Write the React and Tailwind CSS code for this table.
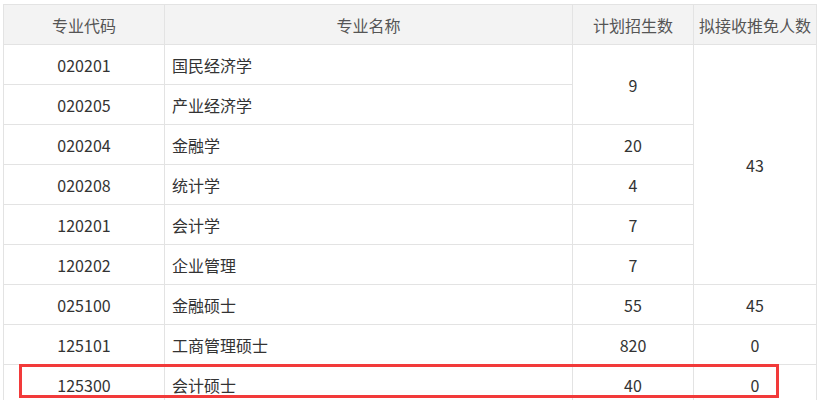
const rows = [
  { code: "020201", name: "国民经济学", plan: { v: "9", span: 2 }, tm: { v: "43", span: 6 } },
  { code: "020205", name: "产业经济学" },
  { code: "020204", name: "金融学", plan: { v: "20", span: 1 } },
  { code: "020208", name: "统计学", plan: { v: "4", span: 1 } },
  { code: "120201", name: "会计学", plan: { v: "7", span: 1 } },
  { code: "120202", name: "企业管理", plan: { v: "7", span: 1 } },
  { code: "025100", name: "金融硕士", plan: { v: "55", span: 1 }, tm: { v: "45", span: 1 } },
  { code: "125101", name: "工商管理硕士", plan: { v: "820", span: 1 }, tm: { v: "0", span: 1 } },
  { code: "125300", name: "会计硕士", plan: { v: "40", span: 1 }, tm: { v: "0", span: 1 } },
];

const cell = "border border-[#e3e3e3] h-[40px] p-0";

export default function App() {
  return (
    <div
      className="relative w-[820px] h-[400px] overflow-hidden bg-white pl-[3px] pt-[4px] text-[16px] text-[#333]"
      style={{ fontFamily: '"Noto Sans CJK SC", "Noto Sans", sans-serif' }}
    >
      <table className="table-fixed border-collapse w-[813px]">
        <colgroup>
          <col className="w-[161px]" />
          <col className="w-[408px]" />
          <col className="w-[121px]" />
          <col className="w-[123px]" />
        </colgroup>
        <thead>
          <tr className="bg-[#f3f3f3] text-[#555]">
            <th className={`${cell} font-normal text-center`}>专业代码</th>
            <th className={`${cell} font-normal text-center`}>专业名称</th>
            <th className={`${cell} font-normal text-center`}>计划招生数</th>
            <th className={`${cell} font-normal text-center whitespace-nowrap`}>拟接收推免人数</th>
          </tr>
        </thead>
        <tbody>
          {rows.map((r) => (
            <tr key={r.code}>
              <td className={`${cell} text-center`}>{r.code}</td>
              <td className={`${cell} text-left pl-[7px]`}>{r.name}</td>
              {r.plan && (
                <td rowSpan={r.plan.span} className={`${cell} text-center`}>
                  {r.plan.v}
                </td>
              )}
              {r.tm && (
                <td rowSpan={r.tm.span} className={`${cell} text-center`}>
                  {r.tm.v}
                </td>
              )}
            </tr>
          ))}
        </tbody>
      </table>
      <div className="absolute left-[19px] top-[364px] w-[760px] h-[34px] border-[3px] border-[#f23a3a] pointer-events-none" />
    </div>
  );
}
